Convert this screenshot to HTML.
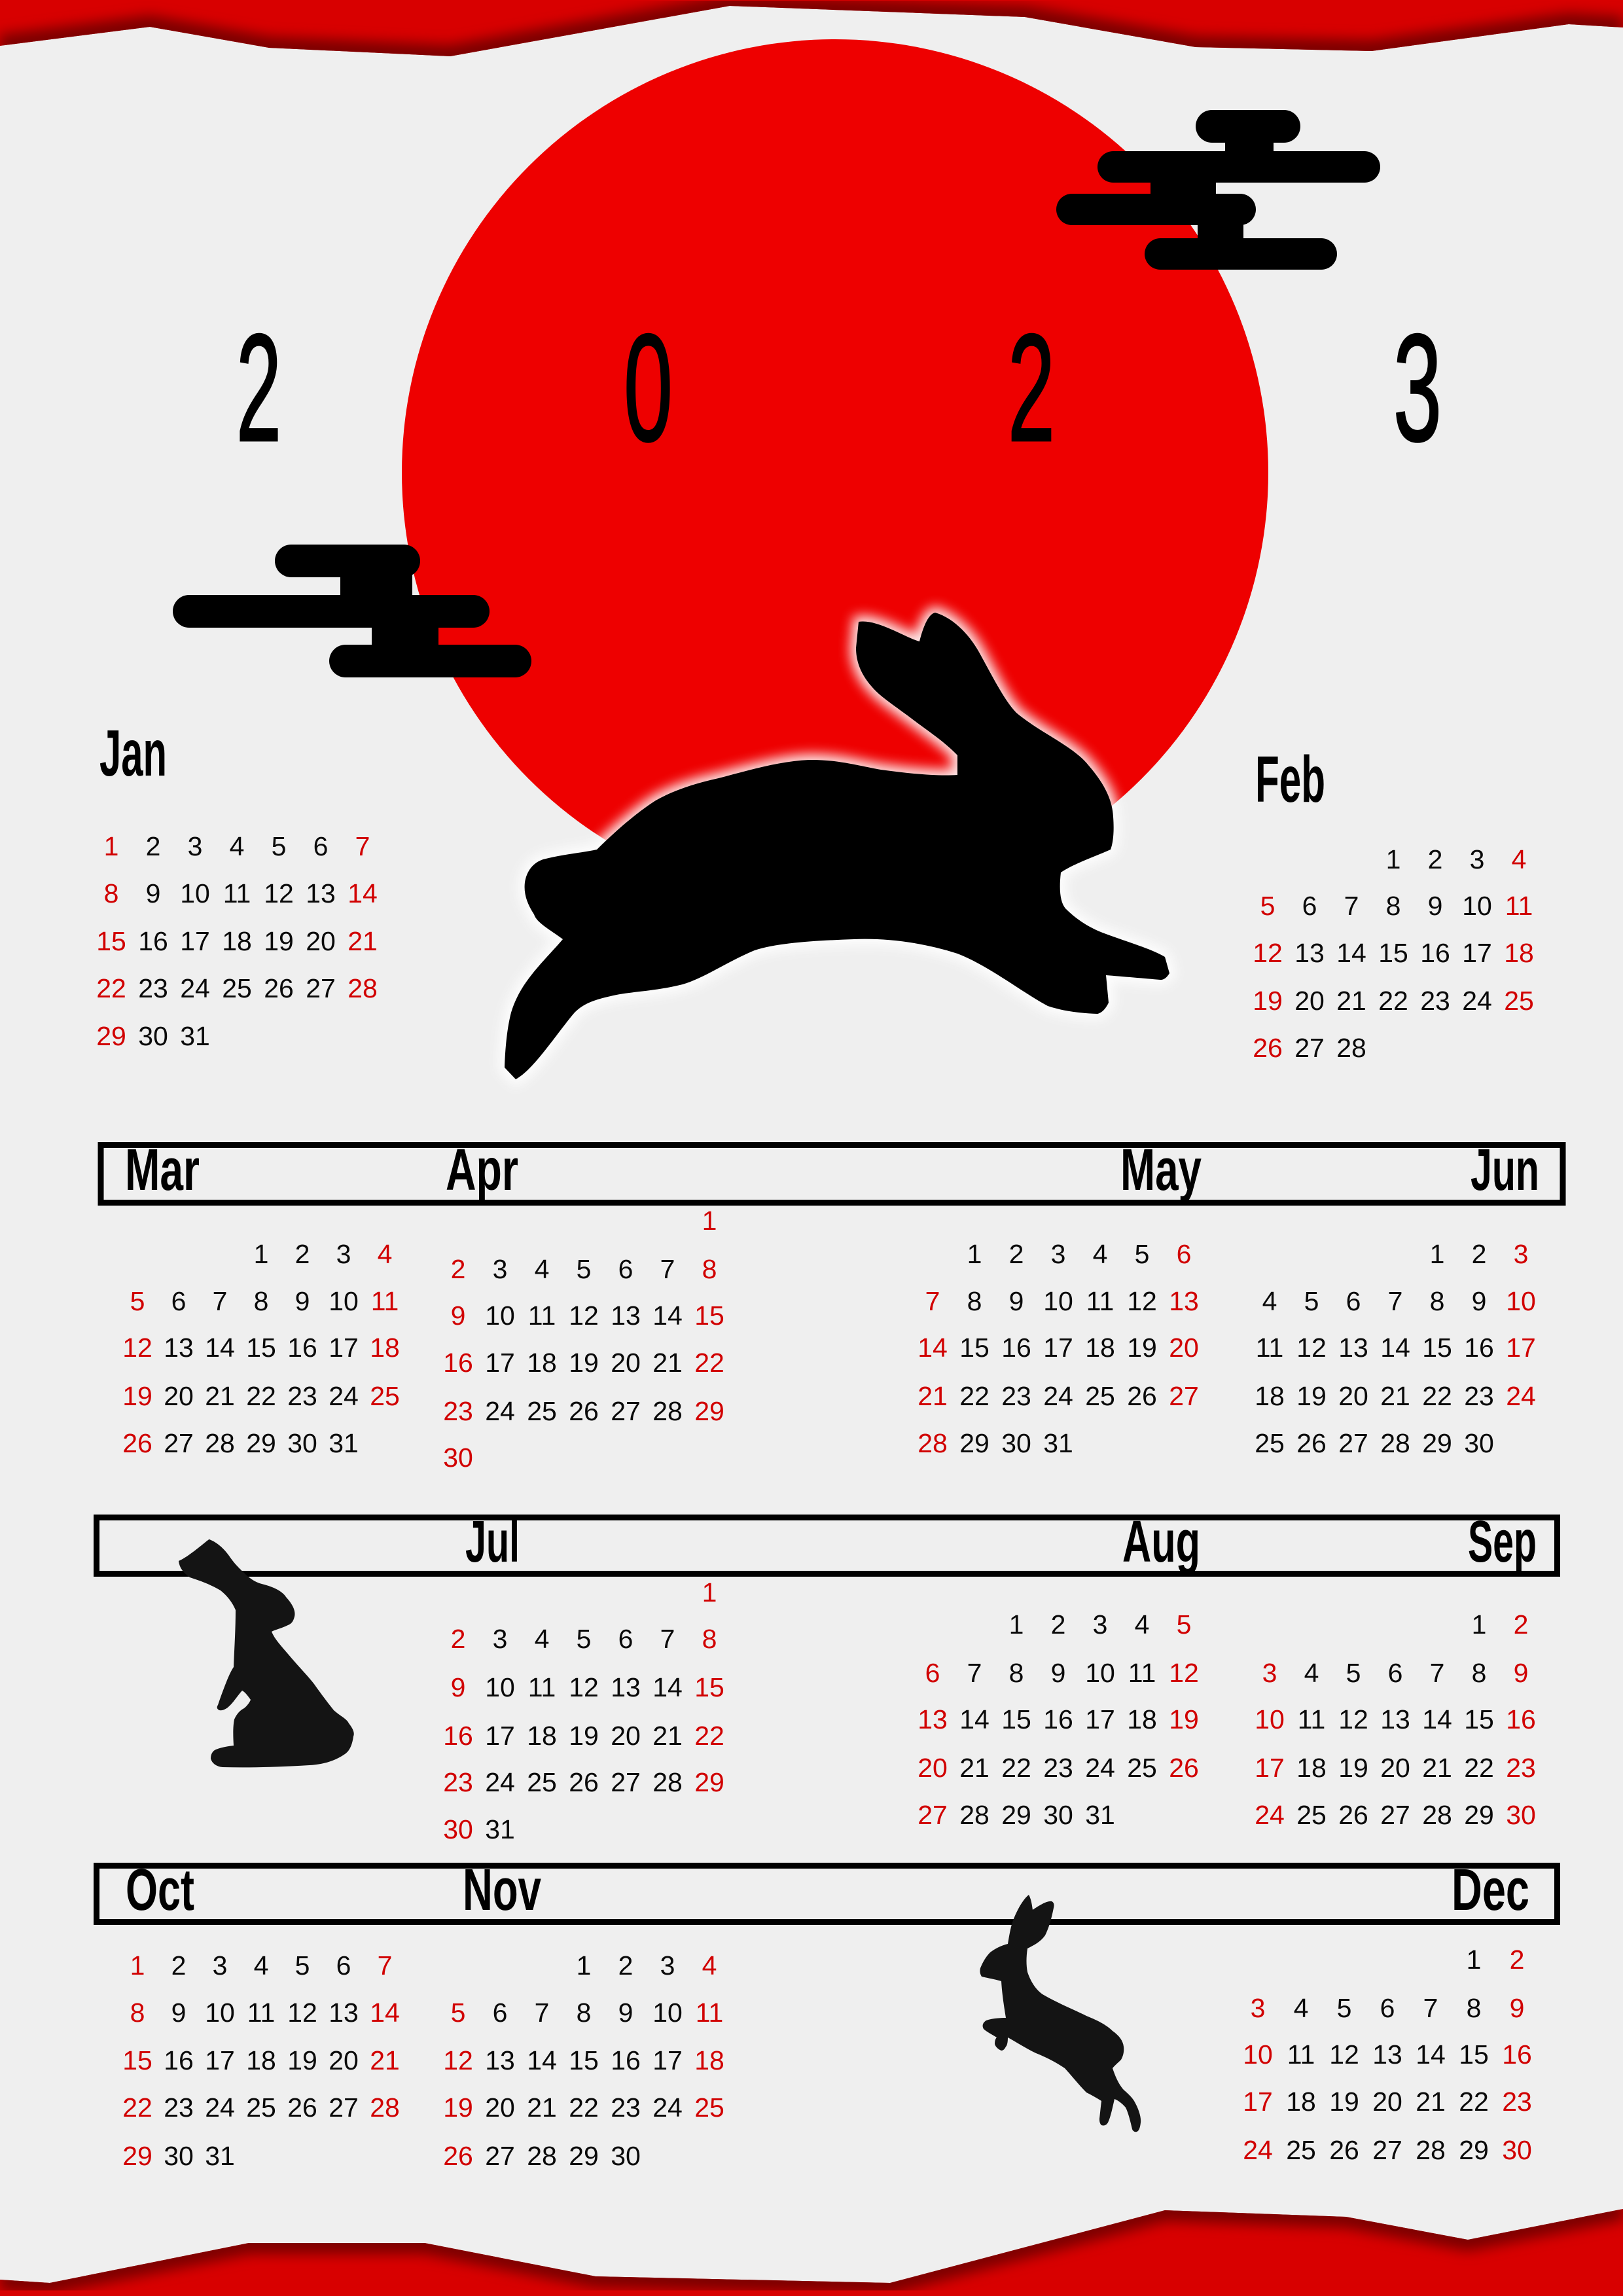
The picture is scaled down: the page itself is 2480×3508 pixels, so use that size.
<!DOCTYPE html>
<html><head><meta charset="utf-8">
<style>
html,body{margin:0;padding:0;background:#efefef;}
svg{display:block;}
.d{font-family:"Liberation Sans",sans-serif;font-size:41px;fill:#0a0a0a;text-anchor:middle;}
.r{fill:#d10000;}
.lb{font-family:"Liberation Sans",sans-serif;font-weight:bold;fill:#000;}
.yr{font-family:"Liberation Sans",sans-serif;font-size:233px;fill:#000;stroke:#000;stroke-width:3;}
</style></head>
<body>
<svg width="2480" height="3508" viewBox="0 0 2480 3508" xmlns="http://www.w3.org/2000/svg">
<defs>
<filter id="bl" x="-10%" y="-10%" width="120%" height="120%"><feGaussianBlur stdDeviation="10"/></filter>
<filter id="gl" x="-10%" y="-10%" width="120%" height="120%"><feGaussianBlur stdDeviation="9"/></filter>
<clipPath id="ct"><polygon points="0,0 2480,0 2480,42 2397,37 2096,78 1827,72 1566,26 1115,9 688,86 411,73 229,41 0,70"/></clipPath>
<clipPath id="cb"><polygon points="0,3483 76,3488 380,3427 649,3427 910,3478 1360,3488 1780,3377 2057,3387 2243,3422 2480,3375 2480,3508 0,3508"/></clipPath>
</defs>
<rect width="2480" height="3508" fill="#efefef"/>

<g clip-path="url(#ct)">
<rect width="2480" height="100" fill="#d80000"/>
<polyline points="0,70 229,41 411,73 688,86 1115,9 1566,26 1827,72 2096,78 2397,37 2480,42" fill="none" stroke="#7a0000" stroke-width="34" filter="url(#bl)"/>
</g>
<g clip-path="url(#cb)">
<rect y="3360" width="2480" height="148" fill="#d80000"/>
<polyline points="0,3483 76,3488 380,3427 649,3427 910,3478 1360,3488 1780,3377 2057,3387 2243,3422 2480,3375" fill="none" stroke="#7a0000" stroke-width="34" filter="url(#bl)"/>
</g>

<circle cx="1276" cy="722" r="662" fill="#ee0000"/>

<g fill="#000">
<rect x="1827" y="168" width="160" height="50" rx="25"/>
<rect x="1677" y="231" width="432" height="48" rx="24"/>
<rect x="1614" y="296" width="305" height="48" rx="24"/>
<rect x="1749" y="364" width="294" height="48" rx="24"/>
<rect x="1872" y="210" width="74" height="30"/>
<rect x="1758" y="270" width="100" height="32"/>
<rect x="1830" y="338" width="70" height="32"/>
</g>
<g fill="#000">
<rect x="420" y="832" width="222" height="50" rx="25"/>
<rect x="264" y="909" width="484" height="50" rx="25"/>
<rect x="503" y="985" width="309" height="50" rx="25"/>
<rect x="520" y="875" width="110" height="40"/>
<rect x="568" y="952" width="102" height="40"/>
</g>

<text class="yr" x="361" y="673" textLength="69" lengthAdjust="spacingAndGlyphs">2</text>
<text class="yr" x="953" y="673" textLength="75" lengthAdjust="spacingAndGlyphs">0</text>
<text class="yr" x="1540" y="673" textLength="72" lengthAdjust="spacingAndGlyphs">2</text>
<text class="yr" x="2129" y="673" textLength="74" lengthAdjust="spacingAndGlyphs">3</text>

<path d="M1312,950 C1340,945 1385,975 1405,980 C1410,960 1418,938 1429,936 C1460,945 1485,975 1498,1000 C1520,1040 1535,1070 1553,1089 C1590,1120 1640,1140 1663,1169 C1690,1200 1700,1225 1701,1248 C1703,1275 1700,1290 1697,1298 C1670,1310 1640,1320 1621,1333 C1618,1360 1620,1378 1628,1388 C1645,1405 1665,1418 1690,1427 C1725,1440 1760,1450 1780,1462 L1787,1487 C1782,1495 1778,1497 1773,1497 C1750,1495 1715,1492 1690,1490 L1694,1532 C1690,1540 1685,1547 1677,1549 C1650,1548 1625,1545 1601,1537 C1560,1515 1510,1475 1463,1457 C1410,1440 1355,1433 1305,1435 C1250,1437 1190,1440 1153,1452 C1110,1470 1075,1495 1043,1504 C1000,1515 960,1515 933,1522 C905,1528 890,1535 878,1547 C850,1580 815,1635 788,1649 L771,1631 C772,1600 775,1570 781,1547 C795,1500 830,1470 860,1435 C840,1420 820,1410 816,1397 C805,1380 800,1365 802,1348 C805,1330 815,1318 830,1313 C860,1305 890,1303 912,1298 C940,1270 975,1240 1002,1223 C1030,1207 1065,1196 1098,1189 C1140,1178 1190,1163 1236,1161 C1280,1160 1320,1172 1346,1176 C1390,1182 1430,1186 1463,1184 L1463,1154 C1445,1135 1420,1118 1401,1104 C1370,1080 1345,1065 1332,1049 C1315,1030 1308,1010 1308,990 Z" fill="#fff" stroke="#fff" stroke-width="18" filter="url(#gl)" opacity="0.9"/>
<path d="M1312,950 C1340,945 1385,975 1405,980 C1410,960 1418,938 1429,936 C1460,945 1485,975 1498,1000 C1520,1040 1535,1070 1553,1089 C1590,1120 1640,1140 1663,1169 C1690,1200 1700,1225 1701,1248 C1703,1275 1700,1290 1697,1298 C1670,1310 1640,1320 1621,1333 C1618,1360 1620,1378 1628,1388 C1645,1405 1665,1418 1690,1427 C1725,1440 1760,1450 1780,1462 L1787,1487 C1782,1495 1778,1497 1773,1497 C1750,1495 1715,1492 1690,1490 L1694,1532 C1690,1540 1685,1547 1677,1549 C1650,1548 1625,1545 1601,1537 C1560,1515 1510,1475 1463,1457 C1410,1440 1355,1433 1305,1435 C1250,1437 1190,1440 1153,1452 C1110,1470 1075,1495 1043,1504 C1000,1515 960,1515 933,1522 C905,1528 890,1535 878,1547 C850,1580 815,1635 788,1649 L771,1631 C772,1600 775,1570 781,1547 C795,1500 830,1470 860,1435 C840,1420 820,1410 816,1397 C805,1380 800,1365 802,1348 C805,1330 815,1318 830,1313 C860,1305 890,1303 912,1298 C940,1270 975,1240 1002,1223 C1030,1207 1065,1196 1098,1189 C1140,1178 1190,1163 1236,1161 C1280,1160 1320,1172 1346,1176 C1390,1182 1430,1186 1463,1184 L1463,1154 C1445,1135 1420,1118 1401,1104 C1370,1080 1345,1065 1332,1049 C1315,1030 1308,1010 1308,990 Z" fill="#000"/>

<rect x="154" y="1749.5" width="2234" height="88" fill="none" stroke="#000" stroke-width="9"/>
<rect x="147.5" y="2318.5" width="2232" height="86" fill="none" stroke="#000" stroke-width="9"/>
<rect x="147.5" y="2850.5" width="2232" height="86" fill="none" stroke="#000" stroke-width="9"/>

<text class="lb" x="152" y="1185" font-size="100" textLength="103" lengthAdjust="spacingAndGlyphs">Jan</text>
<text class="lb" x="1918" y="1225" font-size="100" textLength="107" lengthAdjust="spacingAndGlyphs">Feb</text>
<text class="lb" x="191" y="1818" font-size="90" textLength="114" lengthAdjust="spacingAndGlyphs">Mar</text>
<text class="lb" x="681" y="1818" font-size="90" textLength="111" lengthAdjust="spacingAndGlyphs">Apr</text>
<text class="lb" x="1712" y="1818" font-size="90" textLength="124" lengthAdjust="spacingAndGlyphs">May</text>
<text class="lb" x="2247" y="1818" font-size="90" textLength="105" lengthAdjust="spacingAndGlyphs">Jun</text>
<text class="lb" x="711" y="2386" font-size="90" textLength="83" lengthAdjust="spacingAndGlyphs">Jul</text>
<text class="lb" x="1715" y="2386" font-size="90" textLength="119" lengthAdjust="spacingAndGlyphs">Aug</text>
<text class="lb" x="2243" y="2386" font-size="90" textLength="105" lengthAdjust="spacingAndGlyphs">Sep</text>
<text class="lb" x="192" y="2918" font-size="90" textLength="105" lengthAdjust="spacingAndGlyphs">Oct</text>
<text class="lb" x="707" y="2918" font-size="90" textLength="120" lengthAdjust="spacingAndGlyphs">Nov</text>
<text class="lb" x="2218" y="2918" font-size="90" textLength="119" lengthAdjust="spacingAndGlyphs">Dec</text>

<path d="M273,2385 C290,2378 320,2350 320,2352 C335,2358 345,2370 350,2377 C360,2392 370,2400 377,2407 C385,2414 392,2418 400,2420 C420,2425 432,2432 437,2440 C448,2452 452,2462 450,2470 C448,2478 445,2481 440,2483 C430,2488 420,2490 415,2493 C420,2505 430,2515 440,2527 C455,2545 470,2560 480,2573 C492,2590 502,2603 510,2613 C520,2622 530,2626 533,2633 C540,2642 542,2648 540,2653 C538,2668 533,2676 527,2680 C510,2692 490,2696 473,2697 C420,2700 380,2701 340,2700 C330,2699 324,2694 322,2687 C322,2680 325,2675 330,2673 C340,2669 350,2668 357,2667 C356,2650 356,2637 358,2627 C362,2618 367,2613 373,2610 C378,2606 382,2600 383,2597 C378,2590 374,2585 370,2583 C362,2592 356,2602 350,2607 C345,2612 339,2614 335,2613 C331,2611 331,2608 333,2605 C338,2590 343,2577 347,2567 C352,2555 355,2550 357,2547 C358,2520 360,2490 360,2460 C355,2448 347,2438 337,2430 C320,2420 305,2415 290,2410 C280,2403 274,2395 273,2385 Z" fill="#141414"/>

<path d="M1572,2895 C1576,2902 1577,2912 1578,2918 C1590,2910 1600,2904 1607,2905 C1611,2907 1611,2911 1610,2915 C1607,2930 1603,2945 1597,2957 C1590,2967 1580,2972 1570,2977 C1568,2990 1568,3003 1570,3013 C1575,3028 1583,3040 1593,3047 C1615,3060 1640,3070 1660,3080 C1680,3088 1692,3095 1700,3103 C1710,3110 1716,3118 1717,3127 C1718,3135 1716,3142 1713,3147 C1708,3152 1703,3156 1700,3160 C1705,3175 1710,3185 1717,3193 C1725,3200 1730,3205 1733,3210 C1740,3222 1744,3235 1743,3243 C1742,3252 1740,3256 1737,3257 C1734,3258 1731,3256 1730,3253 C1727,3240 1724,3228 1720,3220 C1714,3213 1708,3209 1703,3207 C1700,3220 1697,3235 1693,3243 C1690,3248 1686,3248 1683,3247 C1680,3244 1680,3240 1680,3237 C1681,3228 1682,3218 1683,3210 C1675,3205 1668,3201 1660,3197 C1648,3185 1638,3172 1627,3160 C1612,3150 1598,3143 1583,3137 C1568,3130 1553,3120 1540,3113 C1540,3120 1539,3125 1537,3127 C1535,3131 1533,3133 1530,3133 C1525,3131 1521,3127 1520,3123 C1520,3118 1521,3115 1523,3113 C1515,3108 1507,3104 1503,3100 C1500,3095 1502,3090 1507,3087 C1515,3084 1527,3083 1537,3083 C1534,3065 1531,3045 1530,3027 C1520,3024 1508,3022 1500,3020 C1497,3015 1497,3011 1498,3007 C1502,2997 1507,2989 1513,2983 C1522,2976 1532,2972 1540,2970 C1542,2958 1544,2946 1547,2937 C1553,2920 1563,2902 1572,2895 Z" fill="#141414"/>

<text class="d" y="1307"><tspan x="170" class="r">1</tspan><tspan x="234">2</tspan><tspan x="298">3</tspan><tspan x="362">4</tspan><tspan x="426">5</tspan><tspan x="490">6</tspan><tspan x="554" class="r">7</tspan></text>
<text class="d" y="1379"><tspan x="170" class="r">8</tspan><tspan x="234">9</tspan><tspan x="298">10</tspan><tspan x="362">11</tspan><tspan x="426">12</tspan><tspan x="490">13</tspan><tspan x="554" class="r">14</tspan></text>
<text class="d" y="1452"><tspan x="170" class="r">15</tspan><tspan x="234">16</tspan><tspan x="298">17</tspan><tspan x="362">18</tspan><tspan x="426">19</tspan><tspan x="490">20</tspan><tspan x="554" class="r">21</tspan></text>
<text class="d" y="1524"><tspan x="170" class="r">22</tspan><tspan x="234">23</tspan><tspan x="298">24</tspan><tspan x="362">25</tspan><tspan x="426">26</tspan><tspan x="490">27</tspan><tspan x="554" class="r">28</tspan></text>
<text class="d" y="1597"><tspan x="170" class="r">29</tspan><tspan x="234">30</tspan><tspan x="298">31</tspan></text>

<text class="d" y="1327"><tspan x="2129">1</tspan><tspan x="2193">2</tspan><tspan x="2257">3</tspan><tspan x="2321" class="r">4</tspan></text>
<text class="d" y="1398"><tspan x="1937" class="r">5</tspan><tspan x="2001">6</tspan><tspan x="2065">7</tspan><tspan x="2129">8</tspan><tspan x="2193">9</tspan><tspan x="2257">10</tspan><tspan x="2321" class="r">11</tspan></text>
<text class="d" y="1470"><tspan x="1937" class="r">12</tspan><tspan x="2001">13</tspan><tspan x="2065">14</tspan><tspan x="2129">15</tspan><tspan x="2193">16</tspan><tspan x="2257">17</tspan><tspan x="2321" class="r">18</tspan></text>
<text class="d" y="1543"><tspan x="1937" class="r">19</tspan><tspan x="2001">20</tspan><tspan x="2065">21</tspan><tspan x="2129">22</tspan><tspan x="2193">23</tspan><tspan x="2257">24</tspan><tspan x="2321" class="r">25</tspan></text>
<text class="d" y="1615"><tspan x="1937" class="r">26</tspan><tspan x="2001">27</tspan><tspan x="2065">28</tspan></text>

<text class="d" y="1930"><tspan x="399">1</tspan><tspan x="462">2</tspan><tspan x="525">3</tspan><tspan x="588" class="r">4</tspan></text>
<text class="d" y="2002"><tspan x="210" class="r">5</tspan><tspan x="273">6</tspan><tspan x="336">7</tspan><tspan x="399">8</tspan><tspan x="462">9</tspan><tspan x="525">10</tspan><tspan x="588" class="r">11</tspan></text>
<text class="d" y="2073"><tspan x="210" class="r">12</tspan><tspan x="273">13</tspan><tspan x="336">14</tspan><tspan x="399">15</tspan><tspan x="462">16</tspan><tspan x="525">17</tspan><tspan x="588" class="r">18</tspan></text>
<text class="d" y="2147"><tspan x="210" class="r">19</tspan><tspan x="273">20</tspan><tspan x="336">21</tspan><tspan x="399">22</tspan><tspan x="462">23</tspan><tspan x="525">24</tspan><tspan x="588" class="r">25</tspan></text>
<text class="d" y="2219"><tspan x="210" class="r">26</tspan><tspan x="273">27</tspan><tspan x="336">28</tspan><tspan x="399">29</tspan><tspan x="462">30</tspan><tspan x="525">31</tspan></text>

<text class="d" y="1879"><tspan x="1084" class="r">1</tspan></text>
<text class="d" y="1953"><tspan x="700" class="r">2</tspan><tspan x="764">3</tspan><tspan x="828">4</tspan><tspan x="892">5</tspan><tspan x="956">6</tspan><tspan x="1020">7</tspan><tspan x="1084" class="r">8</tspan></text>
<text class="d" y="2024"><tspan x="700" class="r">9</tspan><tspan x="764">10</tspan><tspan x="828">11</tspan><tspan x="892">12</tspan><tspan x="956">13</tspan><tspan x="1020">14</tspan><tspan x="1084" class="r">15</tspan></text>
<text class="d" y="2096"><tspan x="700" class="r">16</tspan><tspan x="764">17</tspan><tspan x="828">18</tspan><tspan x="892">19</tspan><tspan x="956">20</tspan><tspan x="1020">21</tspan><tspan x="1084" class="r">22</tspan></text>
<text class="d" y="2170"><tspan x="700" class="r">23</tspan><tspan x="764">24</tspan><tspan x="828">25</tspan><tspan x="892">26</tspan><tspan x="956">27</tspan><tspan x="1020">28</tspan><tspan x="1084" class="r">29</tspan></text>
<text class="d" y="2241"><tspan x="700" class="r">30</tspan></text>

<text class="d" y="1930"><tspan x="1489">1</tspan><tspan x="1553">2</tspan><tspan x="1617">3</tspan><tspan x="1681">4</tspan><tspan x="1745">5</tspan><tspan x="1809" class="r">6</tspan></text>
<text class="d" y="2002"><tspan x="1425" class="r">7</tspan><tspan x="1489">8</tspan><tspan x="1553">9</tspan><tspan x="1617">10</tspan><tspan x="1681">11</tspan><tspan x="1745">12</tspan><tspan x="1809" class="r">13</tspan></text>
<text class="d" y="2073"><tspan x="1425" class="r">14</tspan><tspan x="1489">15</tspan><tspan x="1553">16</tspan><tspan x="1617">17</tspan><tspan x="1681">18</tspan><tspan x="1745">19</tspan><tspan x="1809" class="r">20</tspan></text>
<text class="d" y="2147"><tspan x="1425" class="r">21</tspan><tspan x="1489">22</tspan><tspan x="1553">23</tspan><tspan x="1617">24</tspan><tspan x="1681">25</tspan><tspan x="1745">26</tspan><tspan x="1809" class="r">27</tspan></text>
<text class="d" y="2219"><tspan x="1425" class="r">28</tspan><tspan x="1489">29</tspan><tspan x="1553">30</tspan><tspan x="1617">31</tspan></text>

<text class="d" y="1930"><tspan x="2196">1</tspan><tspan x="2260">2</tspan><tspan x="2324" class="r">3</tspan></text>
<text class="d" y="2002"><tspan x="1940">4</tspan><tspan x="2004">5</tspan><tspan x="2068">6</tspan><tspan x="2132">7</tspan><tspan x="2196">8</tspan><tspan x="2260">9</tspan><tspan x="2324" class="r">10</tspan></text>
<text class="d" y="2073"><tspan x="1940">11</tspan><tspan x="2004">12</tspan><tspan x="2068">13</tspan><tspan x="2132">14</tspan><tspan x="2196">15</tspan><tspan x="2260">16</tspan><tspan x="2324" class="r">17</tspan></text>
<text class="d" y="2147"><tspan x="1940">18</tspan><tspan x="2004">19</tspan><tspan x="2068">20</tspan><tspan x="2132">21</tspan><tspan x="2196">22</tspan><tspan x="2260">23</tspan><tspan x="2324" class="r">24</tspan></text>
<text class="d" y="2219"><tspan x="1940">25</tspan><tspan x="2004">26</tspan><tspan x="2068">27</tspan><tspan x="2132">28</tspan><tspan x="2196">29</tspan><tspan x="2260">30</tspan></text>

<text class="d" y="2447"><tspan x="1084" class="r">1</tspan></text>
<text class="d" y="2518"><tspan x="700" class="r">2</tspan><tspan x="764">3</tspan><tspan x="828">4</tspan><tspan x="892">5</tspan><tspan x="956">6</tspan><tspan x="1020">7</tspan><tspan x="1084" class="r">8</tspan></text>
<text class="d" y="2592"><tspan x="700" class="r">9</tspan><tspan x="764">10</tspan><tspan x="828">11</tspan><tspan x="892">12</tspan><tspan x="956">13</tspan><tspan x="1020">14</tspan><tspan x="1084" class="r">15</tspan></text>
<text class="d" y="2666"><tspan x="700" class="r">16</tspan><tspan x="764">17</tspan><tspan x="828">18</tspan><tspan x="892">19</tspan><tspan x="956">20</tspan><tspan x="1020">21</tspan><tspan x="1084" class="r">22</tspan></text>
<text class="d" y="2737"><tspan x="700" class="r">23</tspan><tspan x="764">24</tspan><tspan x="828">25</tspan><tspan x="892">26</tspan><tspan x="956">27</tspan><tspan x="1020">28</tspan><tspan x="1084" class="r">29</tspan></text>
<text class="d" y="2809"><tspan x="700" class="r">30</tspan><tspan x="764">31</tspan></text>

<text class="d" y="2496"><tspan x="1553">1</tspan><tspan x="1617">2</tspan><tspan x="1681">3</tspan><tspan x="1745">4</tspan><tspan x="1809" class="r">5</tspan></text>
<text class="d" y="2570"><tspan x="1425" class="r">6</tspan><tspan x="1489">7</tspan><tspan x="1553">8</tspan><tspan x="1617">9</tspan><tspan x="1681">10</tspan><tspan x="1745">11</tspan><tspan x="1809" class="r">12</tspan></text>
<text class="d" y="2641"><tspan x="1425" class="r">13</tspan><tspan x="1489">14</tspan><tspan x="1553">15</tspan><tspan x="1617">16</tspan><tspan x="1681">17</tspan><tspan x="1745">18</tspan><tspan x="1809" class="r">19</tspan></text>
<text class="d" y="2715"><tspan x="1425" class="r">20</tspan><tspan x="1489">21</tspan><tspan x="1553">22</tspan><tspan x="1617">23</tspan><tspan x="1681">24</tspan><tspan x="1745">25</tspan><tspan x="1809" class="r">26</tspan></text>
<text class="d" y="2787"><tspan x="1425" class="r">27</tspan><tspan x="1489">28</tspan><tspan x="1553">29</tspan><tspan x="1617">30</tspan><tspan x="1681">31</tspan></text>

<text class="d" y="2496"><tspan x="2260">1</tspan><tspan x="2324" class="r">2</tspan></text>
<text class="d" y="2570"><tspan x="1940" class="r">3</tspan><tspan x="2004">4</tspan><tspan x="2068">5</tspan><tspan x="2132">6</tspan><tspan x="2196">7</tspan><tspan x="2260">8</tspan><tspan x="2324" class="r">9</tspan></text>
<text class="d" y="2641"><tspan x="1940" class="r">10</tspan><tspan x="2004">11</tspan><tspan x="2068">12</tspan><tspan x="2132">13</tspan><tspan x="2196">14</tspan><tspan x="2260">15</tspan><tspan x="2324" class="r">16</tspan></text>
<text class="d" y="2715"><tspan x="1940" class="r">17</tspan><tspan x="2004">18</tspan><tspan x="2068">19</tspan><tspan x="2132">20</tspan><tspan x="2196">21</tspan><tspan x="2260">22</tspan><tspan x="2324" class="r">23</tspan></text>
<text class="d" y="2787"><tspan x="1940" class="r">24</tspan><tspan x="2004">25</tspan><tspan x="2068">26</tspan><tspan x="2132">27</tspan><tspan x="2196">28</tspan><tspan x="2260">29</tspan><tspan x="2324" class="r">30</tspan></text>

<text class="d" y="3017"><tspan x="210" class="r">1</tspan><tspan x="273">2</tspan><tspan x="336">3</tspan><tspan x="399">4</tspan><tspan x="462">5</tspan><tspan x="525">6</tspan><tspan x="588" class="r">7</tspan></text>
<text class="d" y="3089"><tspan x="210" class="r">8</tspan><tspan x="273">9</tspan><tspan x="336">10</tspan><tspan x="399">11</tspan><tspan x="462">12</tspan><tspan x="525">13</tspan><tspan x="588" class="r">14</tspan></text>
<text class="d" y="3162"><tspan x="210" class="r">15</tspan><tspan x="273">16</tspan><tspan x="336">17</tspan><tspan x="399">18</tspan><tspan x="462">19</tspan><tspan x="525">20</tspan><tspan x="588" class="r">21</tspan></text>
<text class="d" y="3234"><tspan x="210" class="r">22</tspan><tspan x="273">23</tspan><tspan x="336">24</tspan><tspan x="399">25</tspan><tspan x="462">26</tspan><tspan x="525">27</tspan><tspan x="588" class="r">28</tspan></text>
<text class="d" y="3308"><tspan x="210" class="r">29</tspan><tspan x="273">30</tspan><tspan x="336">31</tspan></text>

<text class="d" y="3017"><tspan x="892">1</tspan><tspan x="956">2</tspan><tspan x="1020">3</tspan><tspan x="1084" class="r">4</tspan></text>
<text class="d" y="3089"><tspan x="700" class="r">5</tspan><tspan x="764">6</tspan><tspan x="828">7</tspan><tspan x="892">8</tspan><tspan x="956">9</tspan><tspan x="1020">10</tspan><tspan x="1084" class="r">11</tspan></text>
<text class="d" y="3162"><tspan x="700" class="r">12</tspan><tspan x="764">13</tspan><tspan x="828">14</tspan><tspan x="892">15</tspan><tspan x="956">16</tspan><tspan x="1020">17</tspan><tspan x="1084" class="r">18</tspan></text>
<text class="d" y="3234"><tspan x="700" class="r">19</tspan><tspan x="764">20</tspan><tspan x="828">21</tspan><tspan x="892">22</tspan><tspan x="956">23</tspan><tspan x="1020">24</tspan><tspan x="1084" class="r">25</tspan></text>
<text class="d" y="3308"><tspan x="700" class="r">26</tspan><tspan x="764">27</tspan><tspan x="828">28</tspan><tspan x="892">29</tspan><tspan x="956">30</tspan></text>

<text class="d" y="3008"><tspan x="2252">1</tspan><tspan x="2318" class="r">2</tspan></text>
<text class="d" y="3082"><tspan x="1922" class="r">3</tspan><tspan x="1988">4</tspan><tspan x="2054">5</tspan><tspan x="2120">6</tspan><tspan x="2186">7</tspan><tspan x="2252">8</tspan><tspan x="2318" class="r">9</tspan></text>
<text class="d" y="3153"><tspan x="1922" class="r">10</tspan><tspan x="1988">11</tspan><tspan x="2054">12</tspan><tspan x="2120">13</tspan><tspan x="2186">14</tspan><tspan x="2252">15</tspan><tspan x="2318" class="r">16</tspan></text>
<text class="d" y="3225"><tspan x="1922" class="r">17</tspan><tspan x="1988">18</tspan><tspan x="2054">19</tspan><tspan x="2120">20</tspan><tspan x="2186">21</tspan><tspan x="2252">22</tspan><tspan x="2318" class="r">23</tspan></text>
<text class="d" y="3299"><tspan x="1922" class="r">24</tspan><tspan x="1988">25</tspan><tspan x="2054">26</tspan><tspan x="2120">27</tspan><tspan x="2186">28</tspan><tspan x="2252">29</tspan><tspan x="2318" class="r">30</tspan></text>
</svg>
</body></html>
